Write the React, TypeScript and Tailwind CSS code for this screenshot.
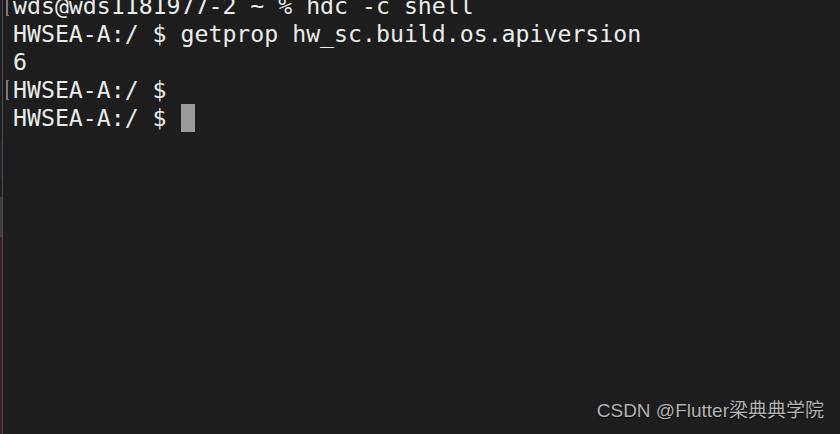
import React from "react";

const lines: { text: string; marked?: boolean; cursor?: boolean }[] = [
  { text: "wds@wds1181977-2 ~ % hdc -c shell", marked: true },
  { text: "HWSEA-A:/ $ getprop hw_sc.build.os.apiversion" },
  { text: "6" },
  { text: "HWSEA-A:/ $", marked: true },
  { text: "HWSEA-A:/ $ ", cursor: true },
];

function Line({ text, marked, cursor }: { text: string; marked?: boolean; cursor?: boolean }) {
  return (
    <div className="flex h-[28px] items-start">
      <div className="w-[10px] shrink-0 pl-[3px] pt-[4px]">
        {marked && <div className="h-[20px] w-[3px] border-y border-l-2 border-[#7c7c7c]" />}
      </div>
      <pre className="m-0 whitespace-pre" style={{ font: "inherit", lineHeight: "27px" }}>
        {text}
      </pre>
      {cursor && <div className="h-[28px] w-[14px] bg-[#9b9b9b]" />}
    </div>
  );
}

export default function App() {
  return (
    <div className="flex h-[434px] w-[840px] overflow-hidden bg-[#1e1e1e]">
      <div className="flex w-[2px] flex-col">
        <div className="h-[140px] bg-[#202020]" />
        <div className="h-[40px] bg-[#1a2636]" />
        <div className="h-[17px] bg-[#1d1f22]" />
        <div className="h-[40px] bg-[#3b4047]" />
        <div className="flex-1 bg-[#4a1a1a]" />
      </div>
      <div className="w-px bg-[#4d4d4d]" />
      <div className="flex flex-1 flex-col">
        <div className="-mt-[8px] font-['DejaVu_Sans_Mono',monospace] text-[23.2px] text-[#ececec]">
          {lines.map((l, i) => (
            <Line key={i} {...l} />
          ))}
        </div>
        <div className="mt-auto mb-[9px] mr-[16px] self-end font-['Liberation_Sans','Noto_Sans_CJK_SC',sans-serif] text-[19px] text-[#b4b4b4] [text-shadow:0_1px_1px_#000]">
          CSDN @Flutter梁典典学院
        </div>
      </div>
    </div>
  );
}
